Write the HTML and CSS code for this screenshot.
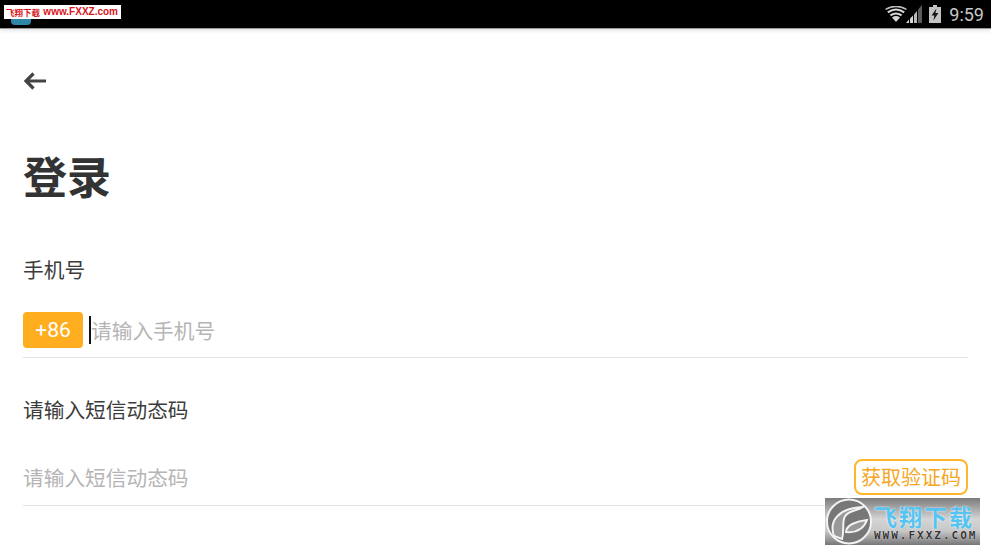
FILE: index.html
```html
<!DOCTYPE html>
<html lang="zh">
<head>
    <meta charset="UTF-8">
    <meta name="viewport" content="width=device-width, initial-scale=1.0">
    <title>登录</title>
    <link rel="stylesheet" href="styles.css">
</head>
<body>
    <div class="status-bar">
        <div class="app-icon"></div>
        <div class="status-right">
            <svg class="icon-wifi" width="22" height="16" viewBox="0 0 22 16">
                <path d="M11 16 L7 11.4 Q11 8.8 15 11.4 Z" fill="#d6d6d6"/>
                <path d="M5.4 9.4 Q11 5.6 16.6 9.4" fill="none" stroke="#d6d6d6" stroke-width="2"/>
                <path d="M2.8 6.3 Q11 0.8 19.2 6.3" fill="none" stroke="#d6d6d6" stroke-width="2"/>
                <path d="M0.6 3.4 Q11 -2.6 21.4 3.4" fill="none" stroke="#bcbcbc" stroke-width="1.6"/>
            </svg>
            <svg class="icon-signal" width="16" height="18" viewBox="0 0 16 18">
                <path d="M0 18 H3 V14.5 Z" fill="#d6d6d6"/>
                <path d="M4 18 H7 V10.5 L4 13.5 Z" fill="#d6d6d6"/>
                <path d="M8 18 H11 V6 L8 9.5 Z" fill="#b8b8b8"/>
                <path d="M12 18 H16 V0 L12 4.5 Z" fill="#5c5c5c"/>
            </svg>
            <svg class="icon-battery" width="12" height="18" viewBox="0 0 12 18">
                <path d="M4 0 H8 V2 H12 V18 H0 V2 H4 Z" fill="#c4c4c4"/>
                <path d="M7.4 3.5 L2.6 10.4 H5.4 L4.4 15.5 L9.4 8 H6.4 Z" fill="#151515"/>
            </svg>
            <span class="status-time">9:59</span>
        </div>
    </div>
    <div class="watermark-top"><span class="wm-top-cn">飞翔下载</span><span>www.FXXZ.com</span></div>

    <div class="page">
        <svg class="back-arrow" width="24" height="20" viewBox="0 0 24 20">
            <path d="M23 10 H3 M10.5 2.5 L3 10 L10.5 17.5" fill="none" stroke="#444" stroke-width="3.2"/>
        </svg>
        <h1 class="title">登录</h1>

        <div class="label label-phone">手机号</div>
        <div class="field field-phone">
            <span class="code-badge">+86</span>
            <span class="caret"></span>
            <span class="placeholder">请输入手机号</span>
        </div>

        <div class="label label-sms">请输入短信动态码</div>
        <div class="field field-sms">
            <span class="placeholder">请输入短信动态码</span>
            <span class="get-code">获取验证码</span>
        </div>
    </div>

    <div class="watermark-bottom">
        <svg class="wm-logo" width="48" height="47" viewBox="0 0 48 47">
            <circle cx="24" cy="23.5" r="22" fill="#777" stroke="#f2f2f2" stroke-width="2"/>
            <path d="M9 38 C4 24 12 10 38 9 C32 13 26 12 21 17 C16 22 20 30 17 41 Z" fill="#999" stroke="#f2f2f2" stroke-width="2"/>
            <path d="M21 34 C21 27 32 23 42 22 C39 30 32 35 21 34 Z" fill="#999" stroke="#f2f2f2" stroke-width="2"/>
        </svg>
        <div class="wm-text">
            <div class="wm-cn">飞翔下载</div>
            <div class="wm-url">WWW.FXXZ.COM</div>
        </div>
    </div>
</body>
</html>
```

FILE: styles.css
```css
html, body {
    margin: 0;
    padding: 0;
}
body {
    width: 991px;
    height: 557px;
    overflow: hidden;
    background-color: #fff;
    font-family: "Noto Sans CJK SC", "Roboto", sans-serif;
    position: relative;
}
.status-bar {
    height: 28px;
    background-color: #000;
    border-bottom: 1px solid #9a9a9a;
    box-shadow: 0 1px 4px rgba(0, 0, 0, 0.15);
    display: flex;
    justify-content: space-between;
}
.app-icon {
    width: 20px;
    height: 6px;
    margin: 19px 0 0 11px;
    background-color: #2f86a6;
    border-radius: 0 0 4px 4px;
}
.status-right {
    display: flex;
    align-items: center;
    padding-right: 7px;
}
.icon-wifi {
    margin-right: -1px;
}
.icon-battery {
    margin-left: 7px;
}
.status-time {
    font-family: "Roboto", sans-serif;
    font-size: 18px;
    color: #c8c8c8;
    margin-left: 8px;
}
.watermark-top {
    position: absolute;
    left: 4px;
    top: 5px;
    width: 117px;
    height: 14px;
    box-sizing: border-box;
    padding: 0 3px 0 2px;
    background-color: #fff;
    color: #d8141c;
    font-family: "Liberation Sans", "Noto Sans CJK SC", sans-serif;
    font-size: 10px;
    font-weight: bold;
    line-height: 14px;
    white-space: nowrap;
    display: flex;
    justify-content: space-between;
}
.wm-top-cn {
    font-family: "Noto Sans CJK SC", sans-serif;
    font-size: 8.5px;
}
.page {
    padding: 0 23px;
    display: flex;
    flex-direction: column;
}
.back-arrow {
    margin-top: 42px;
    display: block;
}
.title {
    margin: 54px 0 0 0;
    font-size: 44px;
    font-weight: bold;
    line-height: 60px;
    color: #333;
}
.label {
    font-size: 20.7px;
    line-height: 28px;
    color: #3c3c3c;
}
.label-phone {
    margin-top: 50px;
}
.label-sms {
    margin-top: 37px;
}
.field {
    display: flex;
    align-items: center;
    border-bottom: 1px solid #e2e2e2;
    width: 945px;
}
.field-phone {
    margin-top: 29px;
    padding-bottom: 9px;
}
.field-sms {
    margin-top: 36px;
    justify-content: space-between;
    padding-bottom: 10px;
}
.code-badge {
    width: 60px;
    height: 36px;
    background-color: #ffae1f;
    border-radius: 4px;
    color: #fff;
    font-family: "Roboto", sans-serif;
    font-size: 21px;
    line-height: 36px;
    text-align: center;
}
.caret {
    width: 2px;
    height: 28px;
    background-color: #111;
    margin-left: 6px;
}
.placeholder {
    font-size: 20.7px;
    line-height: 28px;
    color: #b5b5b5;
}
.get-code {
    box-sizing: border-box;
    width: 114px;
    height: 36px;
    border: 2px solid #ffb52e;
    border-radius: 8px;
    color: #f5a623;
    font-size: 20px;
    line-height: 32px;
    text-align: center;
}
.watermark-bottom {
    position: absolute;
    left: 825px;
    top: 498px;
    width: 155px;
    height: 47px;
    background: linear-gradient(#7c7c7c, #d4d4d4 45%, #c8c8c8 70%, #777);
    display: flex;
    overflow: hidden;
}
.wm-logo {
    flex-shrink: 0;
}
.wm-text {
    margin-left: 1px;
    padding-top: 5px;
    width: 105px;
}
.wm-cn {
    font-size: 23px;
    line-height: 26px;
    font-weight: bold;
    color: #55c4f0;
    letter-spacing: 2px;
    white-space: nowrap;
    text-shadow: 0 0 2px #fff;
}
.wm-url {
    font-family: "DejaVu Sans Mono", monospace;
    font-size: 11px;
    font-weight: bold;
    line-height: 13px;
    color: #333;
    white-space: nowrap;
    letter-spacing: 2px;
    text-shadow: 0 0 1px #fff;
}
```
